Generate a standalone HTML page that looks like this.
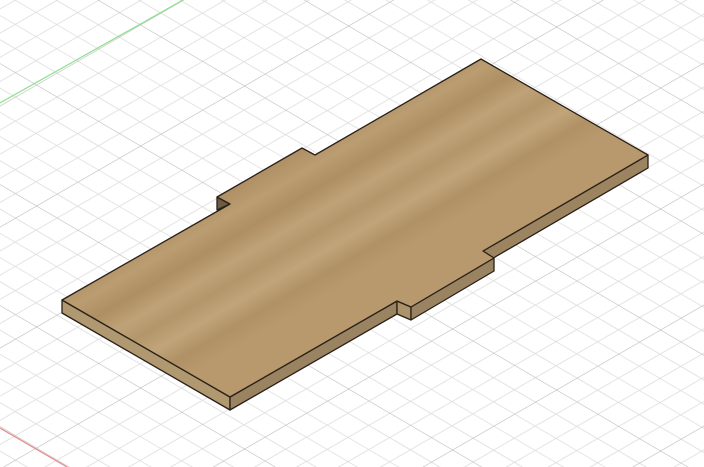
<!DOCTYPE html>
<html><head><style>html,body{margin:0;padding:0;background:#fff;overflow:hidden}svg{display:block}</style></head>
<body>
<svg width="704" height="467" viewBox="0 0 704 467" xmlns="http://www.w3.org/2000/svg">
<defs>
<pattern id="g" width="50" height="50" patternUnits="userSpaceOnUse" patternTransform="matrix(2.08 1.22 2.08 -1.2 36 85)">
<g stroke="#dedede" stroke-width="0.4" fill="none">
<line x1="10" y1="0" x2="10" y2="50"/><line x1="20" y1="0" x2="20" y2="50"/><line x1="30" y1="0" x2="30" y2="50"/><line x1="40" y1="0" x2="40" y2="50"/>
<line y1="10" x1="0" y2="10" x2="50"/><line y1="20" x1="0" y2="20" x2="50"/><line y1="30" x1="0" y2="30" x2="50"/><line y1="40" x1="0" y2="40" x2="50"/>
</g>
<g stroke="#b8b8b8" stroke-width="0.55" fill="none">
<line x1="0" y1="0" x2="0" y2="50"/><line x1="0" y1="0" x2="50" y2="0"/>
</g>
</pattern>
<linearGradient id="w" gradientUnits="userSpaceOnUse" x1="300" y1="150" x2="370" y2="270">
<stop offset="0" stop-color="#b08f64"/>
<stop offset="0.15" stop-color="#bb9d72"/>
<stop offset="0.3" stop-color="#ae8e63"/>
<stop offset="0.45" stop-color="#bfa277"/>
<stop offset="0.58" stop-color="#b4966b"/>
<stop offset="0.72" stop-color="#c1a479"/>
<stop offset="0.86" stop-color="#b09166"/>
<stop offset="1" stop-color="#b8996d"/>
</linearGradient>
</defs>
<rect width="704" height="467" fill="#fff"/>
<rect width="704" height="467" fill="url(#g)"/>
<line x1="0" y1="103" x2="183" y2="0" stroke="#8ee08e" stroke-width="1.2"/>
<line x1="0" y1="428" x2="67" y2="467" stroke="#e88a8a" stroke-width="1.2"/>
<g stroke="#2a2018" stroke-width="1.3" stroke-linejoin="round">
<polygon points="483,251 648,155 648,168 483,264" fill="#9c8460"/>
<polygon points="62,300 230,397 230,410 62,313" fill="#b09870"/>
<polygon points="230,397 397,301 397,314 230,410" fill="#9a8360"/>
<polygon points="397,301 411,307 411,320 397,314" fill="#ab936c"/>
<polygon points="411,307 494,258 494,271 411,320" fill="#9a8360"/>
<polygon points="217,197 230,204 217,210" fill="#6e5c42"/>
<polygon points="62,300 230,204 217,197 302,148 315,155 481,59 648,155 483,251 494,258 411,307 397,301 230,397" fill="url(#w)"/>
</g>
</svg>
</body></html>
